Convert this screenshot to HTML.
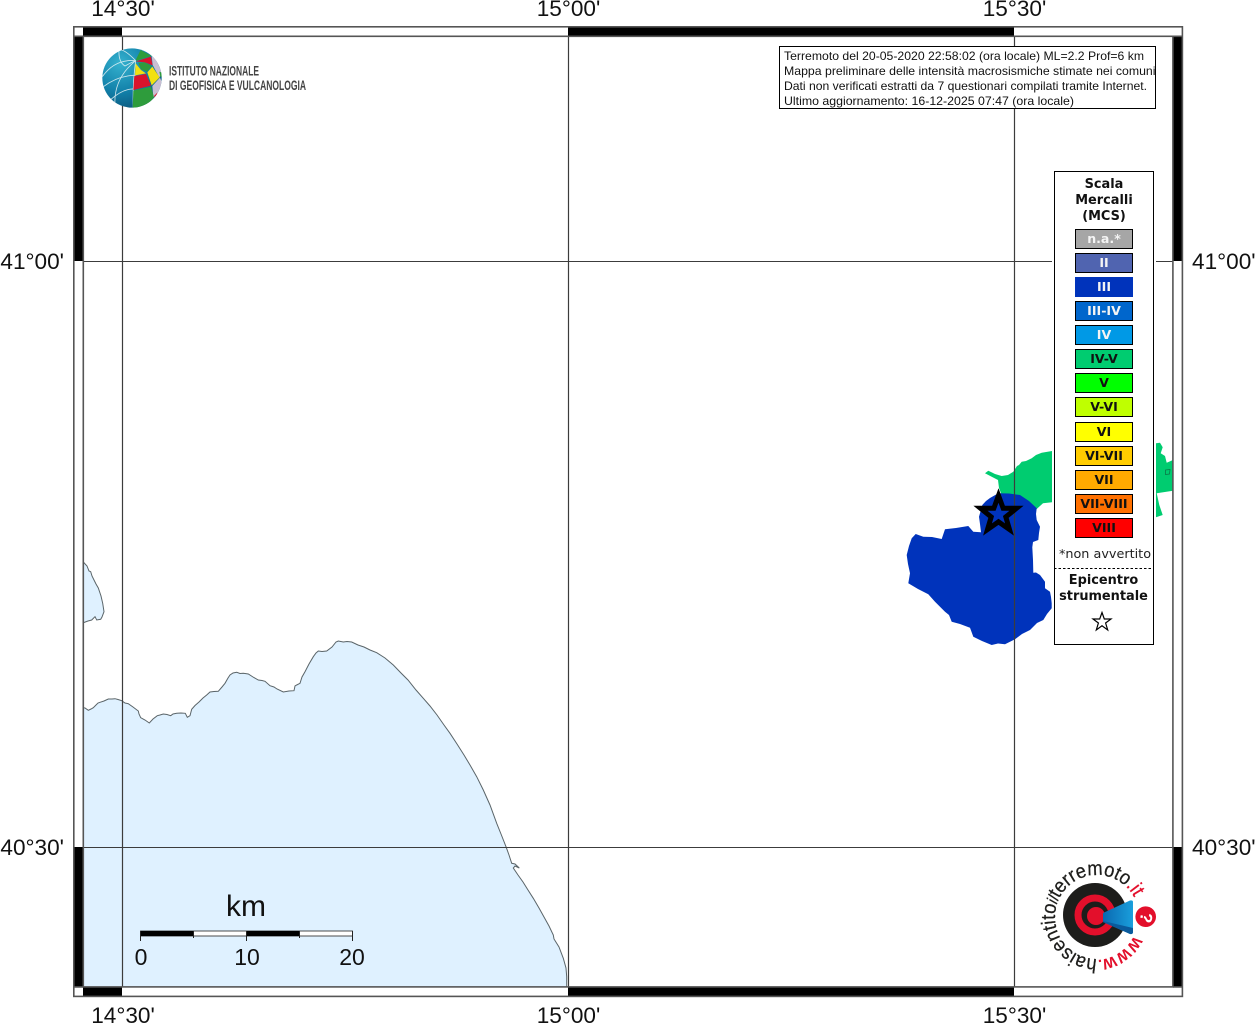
<!DOCTYPE html>
<html lang="it">
<head>
<meta charset="utf-8">
<title>Mappa intensità macrosismiche</title>
<style>
html,body{margin:0;padding:0;background:#fff;width:1256px;height:1024px;overflow:hidden}
svg{display:block;position:absolute;left:0;top:0}
.lab{font-family:"Liberation Sans",sans-serif;font-size:22.6px;fill:#111}
.info{font-family:"Liberation Sans",sans-serif;font-size:12px;fill:#111}
.leg{font-family:"DejaVu Sans",sans-serif;font-size:12.9px;font-weight:bold;fill:#111;text-anchor:middle}
.sw{font-family:"DejaVu Sans",sans-serif;font-size:12.6px;font-weight:bold;text-anchor:middle}
.sc{font-family:"Liberation Sans",sans-serif;font-size:23px;fill:#111;text-anchor:middle}
</style>
</head>
<body>
<svg width="1256" height="1024" viewBox="0 0 1256 1024" xmlns="http://www.w3.org/2000/svg">
<defs>
<radialGradient id="gl" cx="0.3" cy="0.25" r="0.9">
<stop offset="0" stop-color="#35b2cf"/><stop offset="0.55" stop-color="#117fa8"/><stop offset="1" stop-color="#0b4e72"/>
</radialGradient>
<linearGradient id="cone" x1="0" y1="0" x2="1" y2="0">
<stop offset="0" stop-color="#0a68b0"/><stop offset="1" stop-color="#1a9fdc"/>
</linearGradient>
<clipPath id="gc"><circle cx="186" cy="174" r="89"/></clipPath>
<clipPath id="boxc"><rect x="780" y="47" width="377" height="61"/></clipPath>
<clipPath id="mapc"><rect x="83" y="36" width="1090" height="951"/></clipPath>
<path id="ringT" d="M1097 959 A42 42 0 1 1 1097.01 959"/>
<path id="ringW" d="M1134 935.2 A43 43 0 0 1 1098.7 959.8"/>
</defs>

<rect width="1256" height="1024" fill="#fff"/>

<!-- frame bars -->
<g fill="#000">
<rect x="83" y="26" width="39" height="10"/>
<rect x="568" y="26" width="446" height="10"/>
<rect x="83" y="987" width="39" height="10"/>
<rect x="568" y="987" width="446" height="10"/>
<rect x="73" y="36" width="10" height="225"/>
<rect x="73" y="847" width="10" height="140"/>
<rect x="1173" y="36" width="10" height="225"/>
<rect x="1173" y="847" width="10" height="140"/>
</g>

<g clip-path="url(#mapc)">
<!-- land -->
<path fill="#dff1ff" stroke="#5a6468" stroke-width="1" d="M83.3 562 L87 566 L89 571 L90.7 571.7 L92 576 L94 580 L96 584 L98.3 588 L100 593 L101 596 L102.7 603.3 L104 611.7 L102 617 L100.7 619.3 L96.7 620 L95 616.7 L91.7 620 L88 621 L83.3 622.7 L80 622.7 L80 562 Z"/>
<path fill="#dff1ff" stroke="#5a6468" stroke-width="1" d="M80 706 L83.3 707.7 L85 708 L88.3 710.3 L91 709 L93.3 707.7 L96 705 L98 703 L100 702.3 L104 701 L108.3 699 L112 699 L115 698.7 L118 699.5 L121.7 700.7 L125 703 L128.3 703.7 L133 707 L138.3 711 L139 714 L140.7 717.7 L145 720 L149.3 723 L153 719 L157.3 715.7 L160 715 L163.3 714 L167 714.5 L170.7 715.7 L173 714 L176.7 713.3 L181 713 L185.3 713.3 L187.3 717.3 L190 715.7 L191.7 709.3 L195 705.5 L199 702 L203 698 L206.7 695 L210 692 L214 691.5 L218.3 691.3 L222 687 L225 683.3 L228 678 L230 675 L233 673 L236.7 672.3 L240 673.5 L243.3 673.3 L248.3 674 L253 677 L258.3 680 L262 680.5 L265 681.3 L270 685.7 L274 687 L277 689 L283.3 692 L289 691 L294 690.7 L295 686 L296.7 685 L300 683.3 L302 677 L305 671.7 L309 664 L313.3 656.7 L316 653 L318.3 651 L322 651.5 L326.7 651 L332 647 L336 642 L338.3 641 L343.3 642 L347 641.5 L351.7 642 L358 645 L364 647 L370 650 L376.7 652.7 L385 658 L393.3 665 L401 673 L408 680 L416 690 L423.3 698.3 L430 706 L437 715 L444 725 L450 733.3 L457 744 L464 755 L470 765 L476.7 776.7 L483.3 790 L490 805 L496.7 823.3 L501 834 L506 846.7 L509 855 L511.7 863.3 L515 864 L519.3 868 L515 866 L513.3 868 L518 875 L523 882 L528 890 L533.3 898.3 L539 908 L544 917 L549 926 L553.3 935 L554 939 L559 947 L563.3 958.3 L566 968 L566.7 976.7 L566.7 990 L80 990 Z"/>
<!-- macroseismic regions -->
<path fill="#00cc70" d="M985 473.3 L988.3 470.7 L992 472.5 L995 474 L1001.7 476 L1008 475 L1013.3 471.7 L1017 466 L1019 465 L1021.7 461.7 L1026 461 L1031.7 458.3 L1036 455 L1041.7 452.7 L1052 451 L1052 502.3 L1043 503.3 L1036.7 509 L1020 497 L1001.7 495 L999 488 L998 480 L991.7 476.7 Z"/>
<path fill="#00cc70" d="M1156 443.3 L1160 442.7 L1162.7 447.3 L1160.7 453.3 L1165 456 L1166.7 462.7 L1173 460 L1173 490.7 L1156.7 493.3 L1159.3 505 L1162.7 515 L1156 517.3 Z"/>
<path fill="none" stroke="#0a7a48" stroke-width="0.8" d="M1165.5 470 L1170 469.5 L1169.5 474 L1165.5 474.5 Z"/>
<path fill="#0033bb" d="M982.3 505 L986 501 L990 498 L998.3 493.3 L1009 493.5 L1020 495 L1029 501 L1036.7 508.3 L1036 514 L1036.7 520 L1040 526.7 L1039 533 L1038.3 540 L1033 542 L1032.3 547.3 L1033 560 L1033.3 572.7 L1036 572.5 L1040 575 L1045 581.7 L1045 588.3 L1050 591.7 L1051 597 L1051.7 603.3 L1051.7 608.3 L1047 614 L1043.3 620 L1037 623 L1030 630 L1022 634 L1015 639.3 L1005 644.3 L998 643.5 L991.7 645 L982 641 L973.3 636.7 L970 627.7 L960 624 L951.7 621.7 L949 615 L945 611.7 L935 601.7 L928.3 594.3 L918 589 L908.3 583.3 L910 573.3 L908 564 L906.7 555 L909 546 L911.7 538.3 L915.7 534 L923.3 536.7 L932 537 L941.7 539 L945 529.3 L956 528 L968.3 526 L973.3 531.7 L981 532.3 L980 524 L979 516.7 Z"/>
</g>

<!-- grid -->
<g stroke="#3c3c3c" fill="none">
<path stroke-width="1.2" d="M122.5 36V987M568.5 36V987M1014.5 36V987"/>
<path stroke-width="1" d="M83 261.5H1173M83 847.5H1173"/>
</g>

<!-- frame outlines -->
<g stroke="#555" stroke-width="1.6" fill="none">
<rect x="73.8" y="26.8" width="1108.6" height="969.6"/>
<rect x="83.3" y="36.3" width="1089.6" height="950.6"/>
<path d="M73.5 36.3H83M73.5 986.9H83M1173 36.3H1183M1173 986.9H1183"/>
</g>

<!-- epicentre star -->
<path transform="translate(0 -1.5)" fill="none" stroke="#000" stroke-width="5" stroke-miterlimit="10" d="M998.5 497 L1003.2 509.8 L1016.5 509.8 L1005.8 518.4 L1009.5 531 L998.5 523.3 L987.5 531 L991.2 518.4 L980.5 509.8 L993.8 509.8 Z"/>

<!-- legend -->
<rect x="1052" y="169" width="104" height="478" fill="#fff"/>
<rect x="1054.5" y="171.5" width="99" height="473" fill="#fff" stroke="#000" stroke-width="1"/>
<text class="leg" x="1104" y="188">Scala</text>
<text class="leg" x="1104" y="204">Mercalli</text>
<text class="leg" x="1104" y="220">(MCS)</text>
<g stroke="#000" stroke-width="1">
<rect x="1075.5" y="229.5" width="57" height="19" fill="#a6a6a6"/>
<rect x="1075.5" y="253.5" width="57" height="19" fill="#5064b0"/>
<rect x="1075.5" y="277.5" width="57" height="19" fill="#0033bb" stroke="#0033bb"/>
<rect x="1075.5" y="301.5" width="57" height="19" fill="#0066cc"/>
<rect x="1075.5" y="325.5" width="57" height="19" fill="#0099e6"/>
<rect x="1075.5" y="349.5" width="57" height="19" fill="#00cc70"/>
<rect x="1075.5" y="373.5" width="57" height="19" fill="#00ff00"/>
<rect x="1075.5" y="397.5" width="57" height="19" fill="#bfff00"/>
<rect x="1075.5" y="422.5" width="57" height="19" fill="#ffff00"/>
<rect x="1075.5" y="446.5" width="57" height="19" fill="#ffcc00"/>
<rect x="1075.5" y="470.5" width="57" height="19" fill="#ffaa00"/>
<rect x="1075.5" y="494.5" width="57" height="19" fill="#ff7000"/>
<rect x="1075.5" y="518.5" width="57" height="19" fill="#ff0000"/>
</g>
<text class="sw" fill="#f4f4f4" x="1104" y="243">n.a.*</text>
<text class="sw" fill="#f4f4f4" x="1104" y="267">II</text>
<text class="sw" fill="#f4f4f4" x="1104" y="291">III</text>
<text class="sw" fill="#f4f4f4" x="1104" y="315">III-IV</text>
<text class="sw" fill="#f4f4f4" x="1104" y="339">IV</text>
<text class="sw" fill="#111" x="1104" y="363">IV-V</text>
<text class="sw" fill="#111" x="1104" y="387">V</text>
<text class="sw" fill="#111" x="1104" y="411">V-VI</text>
<text class="sw" fill="#111" x="1104" y="436">VI</text>
<text class="sw" fill="#111" x="1104" y="460">VI-VII</text>
<text class="sw" fill="#111" x="1104" y="484">VII</text>
<text class="sw" fill="#111" x="1104" y="508">VII-VIII</text>
<text class="sw" fill="#111" x="1104" y="532">VIII</text>
<text x="1105" y="558" text-anchor="middle" style="font-family:'DejaVu Sans',sans-serif;font-size:12.8px" fill="#222">*non avvertito</text>
<path d="M1054 568.5H1154" stroke="#000" stroke-width="1" stroke-dasharray="2.5 2"/>
<text class="leg" x="1103.5" y="584">Epicentro</text>
<text class="leg" x="1103.5" y="600">strumentale</text>
<path fill="#fff" stroke="#000" stroke-width="1.2" d="M1102 612.5 L1104.3 619 L1111 619 L1105.6 623 L1107.7 630 L1102 625.8 L1096.3 630 L1098.4 623 L1093 619 L1099.7 619 Z"/>

<!-- info box -->
<rect x="779.5" y="46.5" width="376" height="62" fill="#fff" stroke="#000" stroke-width="1"/>
<g clip-path="url(#boxc)">
<text class="info" x="784" y="60" textLength="360" lengthAdjust="spacingAndGlyphs">Terremoto del 20-05-2020 22:58:02 (ora locale) ML=2.2 Prof=6 km</text>
<text class="info" x="784" y="75" textLength="371.5" lengthAdjust="spacingAndGlyphs">Mappa preliminare delle intensità macrosismiche stimate nei comuni</text>
<text class="info" x="784" y="90" textLength="363" lengthAdjust="spacingAndGlyphs">Dati non verificati estratti da 7 questionari compilati tramite Internet.</text>
<text class="info" x="784" y="105" textLength="290" lengthAdjust="spacingAndGlyphs">Ultimo aggiornamento: 16-12-2025 07:47 (ora locale)</text>
</g>

<!-- INGV logo -->
<g transform="translate(70 20) scale(0.3333)">
<circle cx="186" cy="174" r="89" fill="url(#gl)"/>
<g clip-path="url(#gc)">
<g fill="none" stroke="#e8f4f6" stroke-width="2.6" opacity="0.85">
<path d="M197 122 Q160 84 145 90"/>
<path d="M197 122 Q135 116 97 170"/>
<path d="M197 122 Q130 176 135 256"/>
<path d="M197 122 Q187 196 190 270"/>
<path d="M147 90 Q145 126 165 138 Q183 128 197 122"/>
<path d="M100 200 Q145 166 197 166"/>
<path d="M123 238 Q160 206 191 207"/>
</g>
<path fill="#2e9c3c" d="M197 120 L212 90 L245 108 L200 122 Z"/>
<path fill="#d8132c" d="M197 124 L243 110 L248 136 L225 127 Z"/>
<path fill="#c9bfd2" d="M245 108 L262 120 L276 160 L268 172 L248 135 Z"/>
<path fill="#2e9c3c" d="M205 128 L225 127 L245 138 L232 155 L213 148 Z"/>
<path fill="#f2e012" d="M197 130 L213 150 L228 160 L195 166 Z"/>
<path fill="#f2e012" d="M232 157 L247 140 L269 172 L245 196 Z"/>
<path fill="#d8132c" d="M193 168 L228 162 L243 197 L190 210 Z"/>
<path fill="#c9bfd2" d="M247 198 L270 173 L277 190 L270 216 L250 232 Z"/>
<path fill="#2e9c3c" d="M190 212 L243 200 L252 232 L225 265 L188 268 Z"/>
<path fill="#d8132c" d="M252 228 L262 218 L258 234 Z"/>
<path fill="#2e9c3c" d="M268 155 L276 158 L276 172 L271 170 Z"/>
</g>
</g>
<text x="169" y="75.5" textLength="90" lengthAdjust="spacingAndGlyphs" style="font-family:'Liberation Sans',sans-serif;font-size:14px;font-weight:bold" fill="#444">ISTITUTO NAZIONALE</text>
<text x="169" y="90" textLength="137" lengthAdjust="spacingAndGlyphs" style="font-family:'Liberation Sans',sans-serif;font-size:14px;font-weight:bold" fill="#444">DI GEOFISICA E VULCANOLOGIA</text>

<!-- scale bar -->
<rect x="140.5" y="931" width="212" height="5" fill="#fff" stroke="#222" stroke-width="0.8"/>
<rect x="140" y="931" width="54" height="5" fill="#000"/>
<rect x="246" y="931" width="54" height="5" fill="#000"/>
<path d="M140.5 931V941M246.5 931V941M352.5 931V941M193.5 931V938M299.5 931V938" stroke="#222" stroke-width="1" fill="none"/>
<text x="246" y="916" text-anchor="middle" style="font-family:'Liberation Sans',sans-serif;font-size:30px" fill="#111">km</text>
<text class="sc" x="141" y="965">0</text>
<text class="sc" x="247" y="965">10</text>
<text class="sc" x="352" y="965">20</text>

<!-- axis labels -->
<text class="lab" x="123" y="16" text-anchor="middle">14°30'</text>
<text class="lab" x="568.5" y="16" text-anchor="middle">15°00'</text>
<text class="lab" x="1014.5" y="16" text-anchor="middle">15°30'</text>
<text class="lab" x="123" y="1023" text-anchor="middle">14°30'</text>
<text class="lab" x="568.5" y="1023" text-anchor="middle">15°00'</text>
<text class="lab" x="1014.5" y="1023" text-anchor="middle">15°30'</text>
<text class="lab" x="64" y="269" text-anchor="end">41°00'</text>
<text class="lab" x="64" y="855" text-anchor="end">40°30'</text>
<text class="lab" x="1192" y="269">41°00'</text>
<text class="lab" x="1192" y="855">40°30'</text>

<!-- haisentito logo -->
<circle cx="1095" cy="915" r="32" fill="#1d1d1b"/>
<circle cx="1095" cy="915" r="17" fill="none" stroke="#e30f2b" stroke-width="7"/>
<circle cx="1096" cy="916" r="9" fill="#e30f2b"/>
<path fill="url(#cone)" d="M1103 913 L1130 900.5 Q1133 900 1133 902 L1133 932 Q1133 934.5 1130 934 L1103 922 Z"/>
<path fill="#0a5a9c" d="M1103 921 L1133 928 L1133 932 Q1133 934.5 1130 934 L1103 922 Z"/>
<circle cx="1145.7" cy="916.7" r="10.3" fill="#e30f2b"/>
<text transform="translate(1140.5 916.7) rotate(100)" text-anchor="middle" style="font-family:'Liberation Sans',sans-serif;font-size:17px;font-weight:bold" fill="#fff">?</text>
<text style="font-family:'Liberation Sans',sans-serif;font-size:20px" fill="#1d1d1b" stroke="#1d1d1b" stroke-width="0.25"><textPath href="#ringT" startOffset="0" textLength="177" lengthAdjust="spacingAndGlyphs">hai<tspan>sentito</tspan><tspan font-style="italic" font-size="16">il</tspan>terremoto<tspan fill="#e30f2b" stroke="#e30f2b">.it</tspan></textPath></text>
<text style="font-family:'Liberation Sans',sans-serif;font-size:15px;font-weight:bold" fill="#e30f2b"><textPath href="#ringW" startOffset="0">WWW.</textPath></text>
</svg>
</body>
</html>
